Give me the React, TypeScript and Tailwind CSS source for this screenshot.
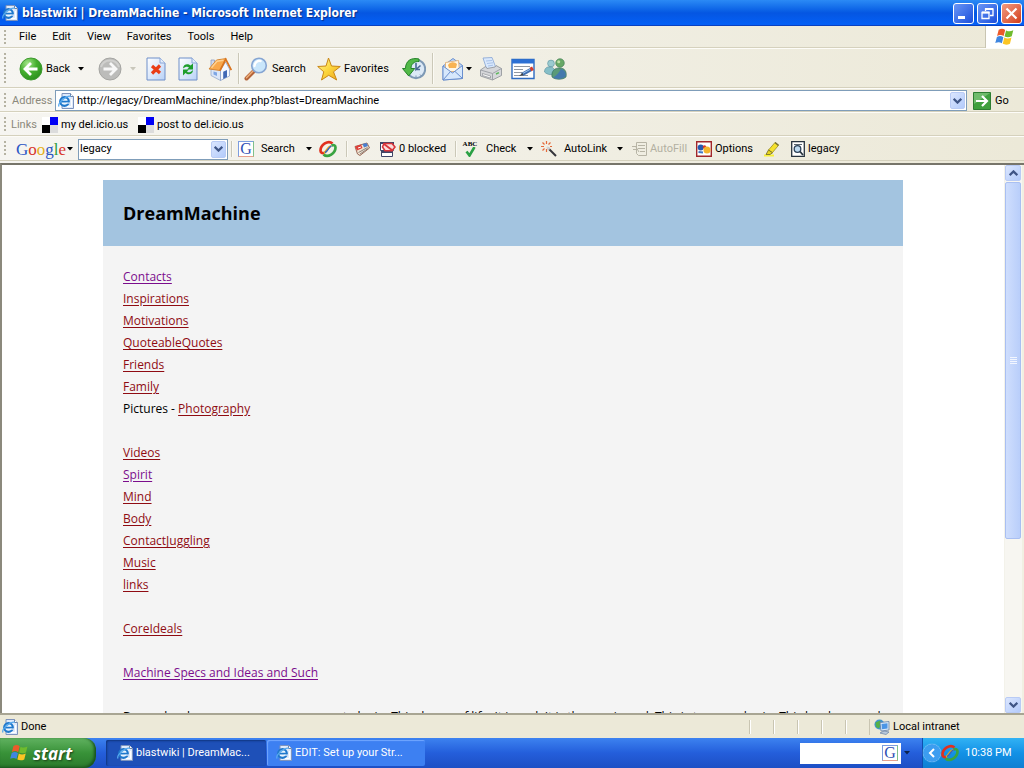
import type { ReactNode } from "react";

function Svg({ className = "size-6", box = "0 0 24 24", children }: { className?: string; box?: string; children: ReactNode }) {
  return (
    <svg className={`shrink-0 ${className}`} viewBox={box} fill="none" aria-hidden="true">
      {children}
    </svg>
  );
}

function Grip({ className = "mr-3" }: { className?: string }) {
  return <span className={`my-1 ml-1 w-[2px] shrink-0 self-stretch bg-[repeating-linear-gradient(#b5b2a2_0_2px,transparent_2px_4px)] ${className}`} />;
}

function Separator() {
  return <span className="my-1 w-[2px] shrink-0 self-stretch border-l border-[#cbc8b8] bg-[#fbfaf4]" />;
}

function Arrow({ className = "text-black" }: { className?: string }) {
  return (
    <Svg className={`h-1 w-[6px] ${className}`} box="0 0 6 4">
      <path d="M0 0h6L3 3.5z" fill="currentColor" />
    </Svg>
  );
}

function PageIcon({ className = "size-4" }: { className?: string }) {
  return (
    <Svg className={className} box="0 0 16 16">
      <path d="M4 .5h8.500l3 3v12H4z" fill="#dfeafb" stroke="#7d93bd" />
      <path d="M12.500.500v3h3" fill="#fff" stroke="#6f84a8" />
      <path d="M13.500 6v7.500H6" stroke="#fff" />
      <circle cx="6.500" cy="8.500" r="4.300" fill="#e9f4ff" stroke="#1f78cc" strokeWidth="2.200" />
      <path d="M3 8.600h8" stroke="#1f78cc" strokeWidth="1.700" />
      <path d="M8.500 9.500h3.500v1.200H8.500z" fill="#dfeafb" />
      <path d="M1 13.500C-.8 10.300 8.500 2.200 12.900 3.300" stroke="#56a9ee" strokeWidth="1.300" />
    </Svg>
  );
}

function BackIcon() {
  return (
    <Svg className="size-6">
      <defs>
        <radialGradient id="back" cx=".35" cy=".25" r=".8">
          <stop stopColor="#a5e58a" />
          <stop offset=".5" stopColor="#46b02f" />
          <stop offset="1" stopColor="#2a8f1c" />
        </radialGradient>
      </defs>
      <circle cx="12" cy="12" r="11" fill="url(#back)" stroke="#3f9a30" />
      <path d="M18.500 12H6.500M12 6l-6 6 6 6" stroke="#fff" strokeWidth="2.800" />
    </Svg>
  );
}

function ForwardIcon() {
  return (
    <Svg className="size-6">
      <circle cx="12" cy="12" r="11" fill="#bcbcba" stroke="#a5a5a2" />
      <path d="M3 10a9.500 9.500 0 0 1 18 0" stroke="#d0d0ce" strokeWidth="2" />
      <path d="M5.500 12h12M12 6l6 6-6 6" stroke="#f7f7f7" strokeWidth="2.800" />
    </Svg>
  );
}

function SheetIcon({ children }: { children: ReactNode }) {
  return (
    <Svg className="h-6 w-5" box="0 0 20 24">
      <defs>
        <linearGradient id="sheet" x2="1" y2="1">
          <stop stopColor="#fff" />
          <stop offset="1" stopColor="#b9d2f7" />
        </linearGradient>
      </defs>
      <path d="M1 1h13l5 5v17H1z" fill="url(#sheet)" stroke="#6f8fc9" />
      <path d="M14 1v5h5" fill="#e3edfc" stroke="#8ba6d6" />
      {children}
    </Svg>
  );
}

function HomeIcon() {
  return (
    <Svg className="size-6">
      <path d="M3 3h3.500v5L3 10z" fill="#cdd8ee" stroke="#7f93bb" strokeWidth=".7" />
      <path d="M3 12v6.500l9.500 5V13z" fill="#dbe6f8" stroke="#8aa0c6" strokeWidth=".7" />
      <path d="M12.500 23.500l9-4.500v-7L17.500 5l-5 8z" fill="#f5f8fe" stroke="#7f98c4" strokeWidth=".7" />
      <path d="M1 12L8.500 3 18 1.500 12 13.500z" fill="#f9a84c" stroke="#cf7a22" strokeWidth=".8" />
      <path d="M3.500 10.800L9 4.200l6.500-1" stroke="#fdd294" strokeWidth="1.400" />
      <path d="M12 13.500L17.800 2.300 23.300 13" stroke="#d9741f" strokeWidth="1.700" />
      <path d="M15.200 14.700l3.800-1.700v7l-3.800 1.900z" fill="#4169b5" />
      <path d="M5.500 14.500l3.500 1v3.500l-3.500-1.600z" fill="#7ea6e4" />
    </Svg>
  );
}

function SearchIcon() {
  return (
    <Svg className="size-6">
      <path d="M2.500 21.500L10 14" stroke="#b4643a" strokeWidth="4" strokeLinecap="round" />
      <path d="M2.500 20.700L9.500 13.600" stroke="#eeb07a" strokeWidth="1.400" strokeLinecap="round" />
      <circle cx="15" cy="8.500" r="7.300" fill="#c9e6fb" stroke="#86a5d2" strokeWidth="1.600" />
      <path d="M10.500 9a5 5 0 0 1 6-5" stroke="#fff" strokeWidth="2.400" strokeLinecap="round" />
    </Svg>
  );
}

function StarIcon() {
  return (
    <Svg className="size-6">
      <defs>
        <linearGradient id="star" x2="1" y2="1">
          <stop stopColor="#fff8a0" />
          <stop offset=".5" stopColor="#fcd63c" />
          <stop offset="1" stopColor="#eda31b" />
        </linearGradient>
      </defs>
      <path d="M11.500 1l3 8 8.800.5-6.800 5.300 3.200 8.200-8-4.700L4.500 23l2.300-8.200L.7 9.500 9 9z" fill="url(#star)" stroke="#c98715" strokeLinejoin="round" />
    </Svg>
  );
}

function HistoryIcon() {
  return (
    <Svg className="size-6">
      <circle cx="14" cy="12" r="9.200" fill="#dce9f6" stroke="#7e99b5" strokeWidth="2" />
      <path d="M14 6v6.500l4.500-4M14 12.500h4" stroke="#486a94" strokeWidth="1.600" />
      <path d="M18 17.500l1.500 1.500M14 18.500v2" stroke="#7790ae" />
      <path d="M17 2C9 .2 3.500 4 3.500 11.500H.5L6.700 19l6-7.500H9C9 7 12 4.300 17 4.500z" fill="#52b947" stroke="#24822a" strokeLinejoin="round" />
    </Svg>
  );
}

function MailIcon() {
  return (
    <Svg className="size-6">
      <path d="M2 9L12 1.500 21.500 8.500v13L2 23z" fill="#bcd6f7" stroke="#6a8fce" />
      <path d="M4.500 5.500l13-2 1 11h-14z" fill="#fff7e6" stroke="#e1aa6a" strokeWidth=".8" />
      <path d="M7 8a5 4 0 0 1 9-1l-1 4H8z" fill="#f8b352" />
      <path d="M2 9l9.500 7 10-7.500v13L2 23z" fill="#d7e8fc" stroke="#6a8fce" />
      <path d="M2 23l7.500-8.500M21.500 21.500L14 14.500" stroke="#6a8fce" />
    </Svg>
  );
}

function PrinterIcon() {
  return (
    <Svg className="size-6">
      <path d="M4 1l9-.5L17 11l-9 2z" fill="#d9e8fc" stroke="#86a4d3" strokeWidth=".8" />
      <path d="M7 4l6-.5M8 6.500l6-.7M9 9l5-.8" stroke="#a9c2e8" />
      <path d="M1.500 13l5-3.500 1.500 2 8-1.500 1-1.500 5.500 3v7l-9 4.500-12-4z" fill="#d6d7da" stroke="#8d9096" strokeWidth=".8" />
      <path d="M1.500 13l12 3.500 9-5M13.500 16.500V23" stroke="#a0a3a9" />
      <path d="M3.500 16.500l8 2.500v2l-8-2.500z" fill="#fafafa" stroke="#7e8188" strokeWidth=".6" />
      <path d="M17 17l3-1.400" stroke="#5cb85a" strokeWidth="1.400" />
    </Svg>
  );
}

function EditIcon() {
  return (
    <Svg className="size-6">
      <path d="M1 2.500h22v19H1z" fill="#fff" stroke="#2d6bc2" strokeWidth="1.400" />
      <path d="M1 2.500h22v4H1z" fill="#2c70d4" />
      <path d="M3 9.500h16M3 12.500h9M3 15.500h8M3 18.500h14" stroke="#9097a1" />
      <path d="M11 17.500l9-5" stroke="#3f6fb0" strokeWidth="3.600" />
      <path d="M12 16.300l7-3.900" stroke="#9dc4f1" />
      <path d="M19.500 12.500l2.500-1.200" stroke="#d53c2c" strokeWidth="4" />
      <path d="M8 19l3.500-3 .8 2.200z" fill="#444" />
    </Svg>
  );
}

function MessengerIcon() {
  return (
    <Svg className="size-6">
      <circle cx="8" cy="6.500" r="3.400" fill="#9bcbd0" stroke="#5d929f" strokeWidth=".6" />
      <path d="M1.500 15c0-4 2.500-5.500 6-5 3 0 5 3 4 6.500-2 2-7 1.500-10-1.500z" fill="#86bfc8" stroke="#528b98" strokeWidth=".6" />
      <circle cx="17" cy="6" r="4.300" fill="#68a866" stroke="#3d7b53" strokeWidth=".6" />
      <path d="M9 20c-1-6 3-9.500 8-9 5 0 7 4 6 9-3 3-11 3-14 0z" fill="#5a9a78" stroke="#2c6658" strokeWidth=".6" />
      <path d="M10 20.800c4-3 6-5 8-8.800 4 1 5.500 4.500 4.500 7.500-3 2.800-8.500 3-12.500 1.300z" fill="#4479ad" />
      <circle cx="15.700" cy="4.800" r="1.500" fill="#bde0a6" />
    </Svg>
  );
}

function WindowsFlag({ className }: { className: string }) {
  return (
    <Svg className={className} box="0 0 22 20">
      <path d="M4 2c3-1.700 5-1.400 7.200.2L9.500 9C7.300 7.500 5 7.400 2.200 8.800z" fill="#ec5a2a" />
      <path d="M12.200 2.700c2.800 1.500 5 1.300 8-.2L18.500 9.300c-3 1.500-5.400 1.400-8 .2z" fill="#6fbb2d" />
      <path d="M2 9.900c2.800-1.500 5-1.200 7.200.3L7.500 17C5.300 15.400 3 15.300.2 16.800z" fill="#3f86e0" />
      <path d="M10.200 10.600c2.800 1.500 5 1.300 8-.1l-1.700 6.900c-3 1.500-5.400 1.300-8 .2z" fill="#fbc524" />
    </Svg>
  );
}

function GIcon() {
  return (
    <span className="flex size-4 shrink-0 items-center justify-center border border-t-[#7d9de0] border-r-[#7fc18a] border-b-[#e8a08c] border-l-[#7d9de0] bg-white font-['Liberation_Serif',serif] text-base leading-none text-[#2f50b5]">
      G
    </span>
  );
}

function Swirl() {
  return (
    <Svg className="size-[18px]" box="0 0 18 18">
      <path d="M13.500 3.500C9-.5 1.500 5 1.500 10.500c0 2 1.500 3 3.500 2.500" stroke="#e0301e" strokeWidth="2.700" />
      <path d="M5 12.800c3-1 3-5.500 7-6.800" stroke="#f2a516" strokeWidth="2.300" />
      <path d="M4.500 14.500c4.500 4 12-1.500 12-7 0-2-1.500-3-4-2" stroke="#3aa442" strokeWidth="2.700" />
      <path d="M12.500 5.800c-3 1-3 5-6.500 6.700" stroke="#2c63c8" strokeWidth="1.400" />
    </Svg>
  );
}

function NewsIcon() {
  return (
    <Svg className="size-4" box="0 0 16 16">
      <path d="M1 5.500L13 2l2.500 5-9.500 7.500L3.500 13z" fill="#f0e2d0" stroke="#9a6a58" />
      <path d="M1 5.500l6-2 1.500 3.500L3 9.500z" fill="#e0403a" />
      <path d="M8.500 3l4-1 1.500 3-4 1.500z" fill="#4a7fd0" />
      <path d="M4.500 11.500l9-5M6 13l8-5.500" stroke="#8c827c" />
      <path d="M4 7l3-1" stroke="#fff" />
    </Svg>
  );
}

function BlockedIcon() {
  return (
    <Svg className="size-4" box="0 0 16 16">
      <path d="M1.500 9.500h11v6h-11zM.5 1.500h13v8H.5z" fill="#fff" stroke="#3f4668" />
      <path d="M1 10h12v2H1zM0 1h14v2H0z" fill="#3f4668" />
      <path d="M4 2.500h8l3 3.500-3 3.800H5L2.500 6z" fill="#fbdcda" stroke="#d9343a" strokeWidth="1.600" />
      <path d="M4 3l8.500 6.500" stroke="#d9343a" strokeWidth="1.700" />
    </Svg>
  );
}

function SpellIcon() {
  return (
    <span className="flex w-4 shrink-0 flex-col items-center font-['Liberation_Serif',serif] text-[7px] leading-[6px] font-bold">
      ABC
      <Svg className="h-[10px] w-[11px]" box="0 0 11 10">
        <path d="M1.500 4.500l3 4L9.500 0" stroke="#2aa044" strokeWidth="2.600" />
      </Svg>
    </span>
  );
}

function WandIcon() {
  return (
    <Svg className="size-4" box="0 0 16 16">
      <path d="M7 7l8 8" stroke="#34343a" strokeWidth="2" />
      <path d="M6 6l2.500 2.500" stroke="#d5d5d5" strokeWidth="2" />
      <path d="M5.500 0v3M0 5.500h3M1.500 1.500l2 2M9.500 1.500l-2 2M1.500 9.500l2-2M5.500 8v3M9 5.500h2" stroke="#e46a3a" strokeWidth="1.200" />
    </Svg>
  );
}

function AutoFillIcon() {
  return (
    <Svg className="size-4" box="0 0 16 16">
      <path d="M4.500 1.500h10v13h-8l-2-2z" fill="#f0eee2" stroke="#b7b4a5" />
      <path d="M6 4.500h7M6 7.500h7M8 10.500h5M0 5.500h4M1 8.500h5M4 6l3 5" stroke="#b7b4a5" />
    </Svg>
  );
}

function OptionsIcon() {
  return (
    <Svg className="size-4" box="0 0 16 16">
      <path d="M.7.700h14.600v14.600H.7z" fill="#fff" stroke="#a1272b" strokeWidth="1.400" />
      <circle cx="4.700" cy="6.500" r="3" fill="#2559b0" />
      <circle cx="8.500" cy="6" r="1.800" fill="#d63a2f" />
      <circle cx="11" cy="9" r="3.500" fill="#f3b52c" />
      <path d="M2.500 11l4.500.5" stroke="#3e77c6" strokeWidth="2" />
    </Svg>
  );
}

function HighlighterIcon() {
  return (
    <Svg className="size-4" box="0 0 16 16">
      <path d="M0 14.500h10" stroke="#f8f03a" strokeWidth="2" />
      <path d="M4.500 9L11 1.500l3.500 2.800L8.500 11.500z" fill="#f5e12c" stroke="#9a8d22" strokeWidth=".8" />
      <path d="M4.500 9l4 2.800-2.500 1.700H2z" stroke="#6d6425" strokeWidth=".8" fill="#e9d61f" />
      <path d="M11 1.500L14.500 4.300" stroke="#77702e" strokeWidth="1.500" />
    </Svg>
  );
}

function FindIcon() {
  return (
    <Svg className="h-4 w-[14px]" box="0 0 14 16">
      <path d="M.7.700h12.600v14.600H.7z" fill="#fff" stroke="#27333f" strokeWidth="1.300" />
      <path d="M3 3.500h8" stroke="#5b6670" />
      <circle cx="6.500" cy="8" r="3.300" fill="#bddaf1" stroke="#2c4159" strokeWidth="1.300" />
      <path d="M9 10.500l3 3.500" stroke="#27333f" strokeWidth="1.800" />
    </Svg>
  );
}

function Delicious() {
  return (
    <span className="grid size-4 shrink-0 grid-cols-2">
      <i className="bg-white" />
      <i className="bg-[#0000f5]" />
      <i className="bg-black" />
      <i className="bg-[#dcdcdc]" />
    </span>
  );
}

function Chevron({ up = false }: { up?: boolean }) {
  return (
    <Svg className="h-[6px] w-[9px]" box="0 0 9 6">
      <path d={up ? "M.7 5.200L4.500 1.400 8.300 5.200" : "M.7.800L4.500 4.600 8.300.8"} stroke="#3f5586" strokeWidth="2.200" />
    </Svg>
  );
}

function ScrollButton({ up = false, label, className = "size-4" }: { up?: boolean; label: string; className?: string }) {
  return (
    <button aria-label={label} className={`flex shrink-0 items-center justify-center rounded-[2px] border border-[#b9cbf5] bg-linear-to-br from-[#dbe6fe] to-[#b3cbfb] ${className}`}>
      <Chevron up={up} />
    </button>
  );
}

function Tool({ icon, label, className = "", children }: { icon: ReactNode; label: string; className?: string; children?: ReactNode }) {
  return (
    <button aria-label={label} className={`flex shrink-0 items-center gap-1 whitespace-nowrap ${className}`}>
      {icon}
      {children}
    </button>
  );
}

const band = "flex shrink-0 items-center border-t border-[#fdfcf8] shadow-[inset_0_-1px_0_#d5d1bd]";

function TitleBar() {
  const key = "flex h-[21px] w-[21px] items-center justify-center rounded-[3px] border border-white";
  return (
    <header className="flex h-[26px] shrink-0 items-center gap-1 bg-linear-to-b from-[#2b8af5] via-[#0556e2] to-[#0461f8] pr-[2px] pl-[2px] shadow-[inset_0_-1px_0_#0a41c0]">
      <PageIcon />
      <h1 className="flex-1 font-['DejaVu_Sans_Condensed','DejaVu_Sans',sans-serif] text-xs font-bold text-white [text-shadow:1px_1px_1px_#0a2f87]">blastwiki | DreamMachine - Microsoft Internet Explorer</h1>
      <div className="flex gap-[3px]">
        <button aria-label="Minimize" className={`${key} bg-linear-to-br from-[#6a95f5] to-[#1c4ddb]`}>
          <Svg className="size-[15px]" box="0 0 15 15"><path d="M2 11.500h7" stroke="#fff" strokeWidth="3" /></Svg>
        </button>
        <button aria-label="Restore" className={`${key} bg-linear-to-br from-[#6a95f5] to-[#1c4ddb]`}>
          <Svg className="size-[15px]" box="0 0 15 15"><path d="M5.500 5V3h7.500v6.500h-3M2 6.500h7v6H2z" stroke="#fff" strokeWidth="1.300" /><path d="M5 3h8M2 6.500h7.500" stroke="#fff" strokeWidth="2" /></Svg>
        </button>
        <button aria-label="Close" className={`${key} bg-linear-to-br from-[#f09a80] to-[#d23a12]`}>
          <Svg className="size-[15px]" box="0 0 15 15"><path d="M2.500 2.500l10 10M12.500 2.500l-10 10" stroke="#fff" strokeWidth="2.200" /></Svg>
        </button>
      </div>
    </header>
  );
}

function MenuBar() {
  return (
    <nav className="flex h-[22px] shrink-0 items-center shadow-[inset_0_-1px_0_#d5d1bd]">
      <Grip />
      <div className="flex flex-1 gap-4 pl-px">
        {["File", "Edit", "View", "Favorites", "Tools", "Help"].map((m) => (
          <button key={m}>{m}</button>
        ))}
      </div>
      <span className="flex w-[39px] items-center justify-center self-stretch border-l border-[#c9c5b2] bg-white">
        <WindowsFlag className="h-[18px] w-5" />
      </span>
    </nav>
  );
}

function ToolBar() {
  return (
    <div className={`${band} h-10`}>
      <Grip className="mr-[13px]" />
      <Tool icon={<BackIcon />} label="Back" className="w-[59px] gap-[3px]">Back</Tool>
      <button aria-label="Back history" className="w-5"><Arrow /></button>
      <Tool icon={<ForwardIcon />} label="Forward" className="w-8" />
      <button aria-label="Forward history" className="w-4"><Arrow className="text-[#c9c7bb]" /></button>
      <Tool
        label="Stop"
        className="w-8"
        icon={<SheetIcon><path d="M6 9l8 7M14 8.500L6 16.500" stroke="#ea3d16" strokeWidth="3.200" /></SheetIcon>}
      />
      <Tool
        label="Refresh"
        className="w-[30px]"
        icon={
          <SheetIcon>
            <path d="M5 11.500c0-4.500 5-5.500 7.500-3L15 6.500v6H9l2-2c-1.500-1.500-3.500-1-6 1z" fill="#1e9e2c" />
            <path d="M15 13c0 4.500-5 5.500-7.500 3L5 18.500v-6h6l-2 2c1.500 1.500 3.500 1 6-1.500z" fill="#1e9e2c" />
          </SheetIcon>
        }
      />
      <Tool icon={<HomeIcon />} label="Home" className="w-[30px]" />
      <Separator />
      <Tool icon={<SearchIcon />} label="Search" className="ml-1 w-[73px]">Search</Tool>
      <Tool icon={<StarIcon />} label="Favorites" className="w-[85px] gap-[3px]">Favorites</Tool>
      <Tool icon={<HistoryIcon />} label="History" className="w-[30px]" />
      <Separator />
      <Tool icon={<MailIcon />} label="Mail" className="ml-[7px] w-[25px]" />
      <button aria-label="Mail options" className="w-[13px]"><Arrow /></button>
      <Tool icon={<PrinterIcon />} label="Print" className="w-8" />
      <Tool icon={<EditIcon />} label="Edit" className="w-8" />
      <Tool icon={<MessengerIcon />} label="Messenger" className="w-8" />
    </div>
  );
}

function AddressBar() {
  return (
    <form className={`${band} h-6`} onSubmit={(e) => e.preventDefault()}>
      <Grip className="mr-[6px]" />
      <label htmlFor="address" className="w-[43px] shrink-0 text-[#8b897c]">Address</label>
      <div className="flex h-[21px] flex-1 items-center border border-[#7f9db9] bg-white pl-[2px]">
        <PageIcon />
        <input id="address" defaultValue="http://legacy/DreamMachine/index.php?blast=DreamMachine" className="ml-[3px] min-w-0 flex-1 outline-none" />
        <ScrollButton label="Address history" className="mr-px h-[17px] w-[15px]" />
      </div>
      <button className="flex w-[57px] items-center gap-1 pl-[6px]">
        <Svg className="size-[18px]" box="0 0 18 18">
          <path d="M.5.500h17v17H.5z" fill="#3f9f3d" stroke="#2d7d31" />
          <path d="M1 1h16L1 12z" fill="#6fbb6b" />
          <path d="M3 9h11M9 4l5 5-5 5" stroke="#fff" strokeWidth="2.200" />
        </Svg>
        Go
      </button>
    </form>
  );
}

function LinksBar() {
  return (
    <nav className={`${band} h-6`}>
      <Grip className="mr-[5px]" />
      <span className="w-[31px] text-[#8b897c]">Links</span>
      <a href="#my" className="flex w-24 items-center gap-[3px] whitespace-nowrap"><Delicious />my del.icio.us</a>
      <a href="#post" className="flex items-center gap-[3px] whitespace-nowrap"><Delicious />post to del.icio.us</a>
    </nav>
  );
}

function GoogleBar() {
  return (
    <div className={`${band} h-[25px]`}>
      <Grip className="mr-[10px]" />
      <button aria-label="Google" className="flex w-[62px] items-center gap-[3px] font-['Liberation_Serif',serif] text-[17px] leading-none">
        <span className="w-12">
          <span className="text-[#2b56c5]">G</span>
          <span className="text-[#d8352a]">o</span>
          <span className="text-[#e5b01b]">o</span>
          <span className="text-[#2b56c5]">g</span>
          <span className="text-[#2c9b3e]">l</span>
          <span className="text-[#d8352a]">e</span>
        </span>
        <Arrow />
      </button>
      <div className="flex h-[21px] w-[150px] shrink-0 items-center border border-[#7f9db9] bg-white">
        <input aria-label="Search terms" defaultValue="legacy" className="min-w-0 flex-1 pl-px outline-none" />
        <ScrollButton label="Search history" className="mr-px h-[17px] w-[15px]" />
      </div>
      <span className="w-[3px] shrink-0" />
      <Separator />
      <Tool icon={<GIcon />} label="Search" className="ml-[5px] w-[68px] gap-[7px]">Search</Tool>
      <button aria-label="Search options" className="w-[13px]"><Arrow /></button>
      <Tool icon={<Swirl />} label="Updates" className="w-[27px]" />
      <Separator />
      <Tool icon={<NewsIcon />} label="News" className="ml-[6px] w-[26px]" />
      <Tool icon={<BlockedIcon />} label="0 blocked" className="w-[75px] gap-[3px]">0 blocked</Tool>
      <Separator />
      <Tool icon={<SpellIcon />} label="Check" className="ml-[5px] w-[65px] gap-2">Check</Tool>
      <button aria-label="Check options" className="w-[14px]"><Arrow /></button>
      <Tool icon={<WandIcon />} label="AutoLink" className="w-[76px] gap-[7px]">AutoLink</Tool>
      <button aria-label="AutoLink options" className="w-[15px]"><Arrow /></button>
      <Tool icon={<AutoFillIcon />} label="AutoFill" className="w-16 gap-[2px] text-[#b3b0a1]">AutoFill</Tool>
      <Tool icon={<OptionsIcon />} label="Options" className="w-[68px] gap-[3px]">Options</Tool>
      <Tool icon={<HighlighterIcon />} label="Highlight" className="w-[27px]" />
      <Tool icon={<FindIcon />} label="Find legacy" className="gap-[3px]">legacy</Tool>
    </div>
  );
}

type Row = { text?: string; before?: string; visited?: boolean };

const rows: Row[] = [
  { text: "Contacts", visited: true },
  { text: "Inspirations" },
  { text: "Motivations" },
  { text: "QuoteableQuotes" },
  { text: "Friends" },
  { text: "Family" },
  { before: "Pictures - ", text: "Photography" },
  {},
  { text: "Videos" },
  { text: "Spirit", visited: true },
  { text: "Mind" },
  { text: "Body" },
  { text: "ContactJuggling" },
  { text: "Music" },
  { text: "links" },
  {},
  { text: "CoreIdeals" },
  {},
  { text: "Machine Specs and Ideas and Such", visited: true },
  {},
];

function WikiPage() {
  return (
    <main className="flex min-h-0 flex-1 border-t-2 border-l-2 border-t-[#77756a] border-l-[#8b897c] bg-white">
      <div className="min-w-0 flex-1 overflow-hidden pt-[15px] font-['Trebuchet_MS','Open_Sans',sans-serif]">
        <article className="mx-auto w-full max-w-[800px] bg-[#f4f4f4]">
          <h2 className="bg-[#a3c4e0] px-5 py-[18px] text-lg leading-[30px] font-bold text-black">DreamMachine</h2>
          <div className="px-5 pt-5 pb-8 text-xs leading-[22px]">
            {rows.map((r, i) => (
              <p key={i} className="min-h-[22px]">
                {r.before}
                {r.text && (
                  <a href={`#${r.text}`} className={`underline underline-offset-2 ${r.visited ? "text-[#7b0d8c]" : "text-[#8f0b12]"}`}>
                    {r.text}
                  </a>
                )}
              </p>
            ))}
            <p>Dream has become so many new ways to be in. This dream of life. It is real. It is the way in and. This is to see a day in. This has been and will be.</p>
          </div>
        </article>
      </div>
      <div className="flex w-5 shrink-0 flex-col items-start gap-px border-r-2 border-l border-r-[#f1efe2] border-l-[#f3f2ea] bg-[#f7f6f1]">
        <ScrollButton up label="Scroll up" />
        <div className="flex h-[357px] w-4 flex-col items-center justify-center gap-px rounded-[2px] border border-[#a9bff2] bg-linear-to-r from-[#cfdefd] to-[#b9cefa]">
          {[0, 1, 2, 3].map((n) => (
            <i key={n} className="h-px w-[7px] bg-[#f2f6ff]" />
          ))}
        </div>
        <span className="flex-1" />
        <ScrollButton label="Scroll down" />
      </div>
    </main>
  );
}

function StatusBar() {
  return (
    <footer className="flex h-[25px] shrink-0 items-center border-t-2 border-[#a8a593] pt-px pl-[2px]">
      <PageIcon />
      <span className="flex-1 pl-[3px]">Done</span>
      {[0, 1, 2, 3, 4].map((n) => (
        <span key={n} className="my-1 w-6 self-stretch border-l border-[#c9c5b2] shadow-[inset_1px_0_0_#fff]" />
      ))}
      <span className="flex w-[155px] items-center gap-[3px] border-l border-[#c9c5b2] pl-1">
        <Svg className="size-4" box="0 0 16 16">
          <path d="M6 14l4-2 5 1-3 2.500z" fill="#b9c9dc" stroke="#667fa5" strokeWidth=".7" />
          <circle cx="5.500" cy="5.500" r="5" fill="#3e93d2" />
          <path d="M1.500 3.500l4.500-2 1 3-2 5-3-1.500z" fill="#54b148" />
          <path d="M6 3.500l9-1v8.500l-8 1z" fill="#d8e9fa" stroke="#667fa5" strokeWidth=".8" />
          <path d="M7.500 5l6-.7v5.200l-5.500.7z" fill="#4b95e6" />
        </Svg>
        Local intranet
      </span>
    </footer>
  );
}

function TaskBar() {
  return (
    <div className="flex h-[30px] shrink-0 items-stretch bg-linear-to-b from-[#3d82f0] via-[#245edb] to-[#1d4fc4] text-white">
      <button className="flex w-24 items-center gap-1 rounded-r-xl bg-linear-to-b from-[#60b260] via-[#389238] to-[#2b7a2c] pl-[10px] shadow-[inset_-2px_-1px_3px_#17501c] font-['Open_Sans',sans-serif] text-[17px] leading-none font-bold italic [text-shadow:1px_1px_2px_#1a3f18]">
        <WindowsFlag className="h-[18px] w-[19px]" />
        start
      </button>
      <div className="ml-[10px] flex flex-1 items-center gap-px">
        <button className="flex h-[26px] w-40 items-center gap-[3px] rounded-[2px] bg-[#1e50b8] pl-[11px] shadow-[inset_1px_1px_2px_#0f347f]">
          <PageIcon />
          blastwiki | DreamMac...
        </button>
        <button className="flex h-[26px] w-[158px] items-center gap-[3px] rounded-[2px] bg-[#3d80f2] pl-[9px] shadow-[inset_1px_1px_1px_#72a7ff]">
          <PageIcon />
          EDIT: Set up your Str...
        </button>
      </div>
      <div className="flex items-center">
        <div className="flex h-[21px] w-[101px] items-center bg-white pr-[3px]">
          <input aria-label="Desktop search" className="min-w-0 flex-1 outline-none" />
          <GIcon />
        </div>
        <button aria-label="Search options" className="flex w-[21px] pl-[3px]"><Arrow className="text-[#0c2350]" /></button>
      </div>
      <div className="flex w-[102px] items-center border-l border-[#0f4fae] bg-linear-to-b from-[#31b2f4] via-[#1291e6] to-[#0f7fd2]">
        <button aria-label="Show hidden icons" className="flex size-[18px] shrink-0 items-center justify-center rounded-full bg-[#3c9df0] shadow-[0_0_1px_#fff]">
          <Svg className="size-3" box="0 0 12 12"><path d="M8 2L4 6l4 4" stroke="#fff" strokeWidth="2" /></Svg>
        </button>
        <Swirl />
        <time className="ml-[6px] whitespace-nowrap">10:38 PM</time>
      </div>
    </div>
  );
}

export default function App() {
  return (
    <div className="flex h-screen flex-col overflow-hidden bg-[#ece9d8] font-['Tahoma','Roboto',sans-serif] text-[11px] leading-4 text-black">
      <TitleBar />
      <div className="shrink-0 bg-linear-to-r from-[#f6f5f1] to-[#ece9d8] pb-[2px]">
        <MenuBar />
        <ToolBar />
        <AddressBar />
        <LinksBar />
        <GoogleBar />
      </div>
      <WikiPage />
      <StatusBar />
      <TaskBar />
    </div>
  );
}
